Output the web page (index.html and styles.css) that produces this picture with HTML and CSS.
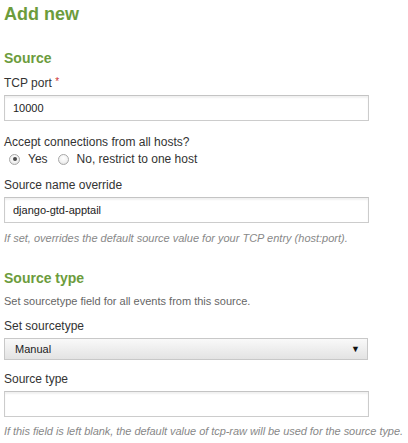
FILE: index.html
```html
<!DOCTYPE html>
<html>
<head>
<meta charset="utf-8">
<link rel="stylesheet" href="styles.css">
</head>
<body>
<main class="page">
  <h1 class="title">Add new</h1>

  <h2 class="section">Source</h2>
  <label class="label label-tcp">TCP port <span class="req">*</span></label>
  <input class="text" type="text" value="10000">

  <div class="label label-accept">Accept connections from all hosts?</div>
  <div class="radios">
    <label class="radio-opt"><input class="radio" type="radio" name="hosts" checked><span>Yes</span></label>
    <label class="radio-opt"><input class="radio" type="radio" name="hosts"><span>No, restrict to one host</span></label>
  </div>

  <label class="label label-name">Source name override</label>
  <input class="text" type="text" value="django-gtd-apptail">
  <p class="help">If set, overrides the default source value for your TCP entry (host:port).</p>

  <h2 class="section section-type">Source type</h2>
  <p class="desc">Set sourcetype field for all events from this source.</p>

  <label class="label label-set">Set sourcetype</label>
  <div class="select">
    <span class="select-value">Manual</span>
    <span class="select-arrow">&#9660;</span>
  </div>

  <label class="label label-type">Source type</label>
  <input class="text" type="text" value="">
  <p class="help help-last">If this field is left blank, the default value of tcp-raw will be used for the source type.</p>
</main>
</body>
</html>
```

FILE: styles.css
```css
html, body {
  margin: 0;
  padding: 0;
  background: #ffffff;
}

.page {
  padding: 0 4px;
  font-family: "Liberation Sans", Arial, sans-serif;
  color: #333333;
  display: flex;
  flex-direction: column;
  align-items: flex-start;
}

.title {
  margin: 3px 0 0;
  font-size: 18px;
  line-height: 22px;
  font-weight: bold;
  color: #6c9c3c;
}

.section {
  margin: 24px 0 0;
  font-size: 14px;
  line-height: 18px;
  font-weight: bold;
  color: #6c9c3c;
}

.section-type {
  margin-top: 24px;
}

.label {
  display: block;
  font-size: 12px;
  line-height: 16px;
  color: #333333;
}

.label-tcp { margin-top: 8px; }
.label-accept { margin-top: 13px; }
.label-name { margin-top: 9px; }
.label-set { margin-top: 10px; }
.label-type { margin-top: 11px; }

.req {
  color: #cc3333;
  font-size: 10px;
  vertical-align: top;
  line-height: 14px;
}

.text {
  box-sizing: border-box;
  margin: 4px 0 0;
  width: 365px;
  height: 26px;
  padding: 0 8px;
  border: 1px solid #cccccc;
  border-top-color: #c4c4c4;
  box-shadow: inset 0 2px 2px rgba(0, 0, 0, 0.06);
  background: #ffffff;
  font-family: "Liberation Sans", Arial, sans-serif;
  font-size: 11px;
  color: #222222;
  outline: none;
}

.radios {
  display: flex;
  align-items: center;
  height: 18px;
  padding-left: 0;
  font-size: 12px;
  color: #333333;
}

.radio-opt {
  display: flex;
  align-items: center;
  margin-right: 5px;
}

.radio {
  appearance: none;
  -webkit-appearance: none;
  box-sizing: border-box;
  width: 11px;
  height: 11px;
  margin: 0 8px 0 5px;
  border: 1px solid #a8a8a8;
  border-radius: 50%;
  background: radial-gradient(circle at 50% 35%, #ffffff 0%, #f2f2f2 55%, #d8d8d8 100%);
  position: relative;
}

.radio:checked::after {
  content: "";
  position: absolute;
  left: 2.5px;
  top: 2.5px;
  width: 4px;
  height: 4px;
  border-radius: 50%;
  background: #4a4a4a;
}

.help {
  margin: 8px 0 0;
  font-size: 11px;
  line-height: 14px;
  font-style: italic;
  color: #888888;
  white-space: nowrap;
}

.help-last {
  margin-top: 7px;
  letter-spacing: -0.05px;
}

.desc {
  margin: 7px 0 0;
  font-size: 11px;
  line-height: 14px;
  color: #666666;
}

.select {
  box-sizing: border-box;
  margin-top: 4px;
  width: 364px;
  height: 22px;
  display: flex;
  align-items: center;
  justify-content: space-between;
  padding: 0 7px 0 10px;
  border: 1px solid #c8c8c8;
  background: linear-gradient(#f9f9f9, #e3e3e3);
  font-size: 11px;
  color: #222222;
}

.select-arrow {
  font-size: 9px;
  color: #111111;
}
```
